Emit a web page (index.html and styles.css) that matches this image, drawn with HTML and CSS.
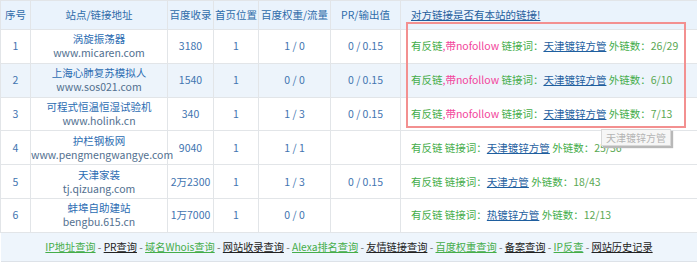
FILE: index.html
```html
<!DOCTYPE html>
<html lang="zh-CN">
<head>
<meta charset="utf-8">
<title>友情链接查询</title>
<link rel="stylesheet" href="styles.css">
</head>
<body>
<div class="wrap">
  <table class="links">
    <colgroup>
      <col class="c-no"><col class="c-site"><col class="c-idx"><col class="c-pos"><col class="c-wt"><col class="c-pr"><col class="c-chk">
    </colgroup>
    <thead>
      <tr>
        <th>序号</th>
        <th>站点/链接地址</th>
        <th>百度收录</th>
        <th>首页位置</th>
        <th>百度权重/流量</th>
        <th>PR/输出值</th>
        <th class="left"><a class="head-link" href="#">对方链接是否有本站的链接!</a></th>
      </tr>
    </thead>
    <tbody>
      <tr>
        <td>1</td>
        <td><div class="name">涡旋振荡器</div><div class="url">www.micaren.com</div></td>
        <td>3180</td><td>1</td><td>1 / 0</td><td>0 / 0.15</td>
        <td class="left"><span class="g">有反链</span><span class="p">,带nofollow</span> <span class="g">链接词：</span><a class="kw" href="#">天津镀锌方管</a> <span class="g">外链数：</span><span class="n">26/29</span></td>
      </tr>
      <tr class="alt">
        <td>2</td>
        <td><div class="name">上海心肺复苏模拟人</div><div class="url">www.sos021.com</div></td>
        <td>1540</td><td>1</td><td>0 / 0</td><td>0 / 0.15</td>
        <td class="left"><span class="g">有反链</span><span class="p">,带nofollow</span> <span class="g">链接词：</span><a class="kw" href="#">天津镀锌方管</a> <span class="g">外链数：</span><span class="n">6/10</span></td>
      </tr>
      <tr>
        <td>3</td>
        <td><div class="name">可程式恒温恒湿试验机</div><div class="url">www.holink.cn</div></td>
        <td>340</td><td>1</td><td>1 / 3</td><td>0 / 0.15</td>
        <td class="left"><span class="g">有反链</span><span class="p">,带nofollow</span> <span class="g">链接词：</span><a class="kw" href="#">天津镀锌方管</a> <span class="g">外链数：</span><span class="n">7/13</span></td>
      </tr>
      <tr>
        <td>4</td>
        <td><div class="name">护栏钢板网</div><div class="url">www.pengmengwangye.com</div></td>
        <td>9040</td><td>1</td><td>1 / 1</td><td></td>
        <td class="left"><span class="g">有反链</span> <span class="g">链接词：</span><a class="kw" href="#">天津镀锌方管</a> <span class="g">外链数：</span><span class="n">25/36</span></td>
      </tr>
      <tr>
        <td>5</td>
        <td><div class="name">天津家装</div><div class="url">tj.qizuang.com</div></td>
        <td>2万2300</td><td>1</td><td>1 / 3</td><td>0 / 0.15</td>
        <td class="left"><span class="g">有反链</span> <span class="g">链接词：</span><a class="kw" href="#">天津方管</a> <span class="g">外链数：</span><span class="n">18/43</span></td>
      </tr>
      <tr>
        <td>6</td>
        <td><div class="name">蚌埠自助建站</div><div class="url">bengbu.615.cn</div></td>
        <td>1万7000</td><td>1</td><td>0 / 0</td><td></td>
        <td class="left"><span class="g">有反链</span> <span class="g">链接词：</span><a class="kw" href="#">热镀锌方管</a> <span class="g">外链数：</span><span class="n">12/13</span></td>
      </tr>
    </tbody>
    <tfoot>
      <tr>
        <td colspan="7" class="foot">
          <a class="fg" href="#">IP地址查询</a> - <a class="fb" href="#">PR查询</a> - <a class="fg" href="#">域名Whois查询</a> - <a class="fb" href="#">网站收录查询</a> - <a class="fg" href="#">Alexa排名查询</a> - <a class="fb" href="#">友情链接查询</a> - <a class="fg" href="#">百度权重查询</a> - <a class="fb" href="#">备案查询</a> - <a class="fg" href="#">IP反查</a> - <a class="fb" href="#">网站历史记录</a>
        </td>
      </tr>
    </tfoot>
  </table>
  <div class="highlight"></div>
  <div class="tip">天津镀锌方管</div>
</div>
</body>
</html>
```

FILE: styles.css
```css
html, body {
  margin: 0;
  padding: 0;
  background: #ffffff;
}
body {
  font-family: "Noto Sans CJK SC", "Liberation Sans", sans-serif;
  font-size: 10.5px;
  font-weight: 400;
  color: #3d6fa8;
}
.wrap {
  position: relative;
  width: 697px;
}
.links {
  width: 697px;
  border-collapse: collapse;
  table-layout: fixed;
}
.c-no { width: 30px; }
.c-site { width: 137px; }
.c-idx { width: 46px; }
.c-pos { width: 45px; }
.c-wt { width: 72px; }
.c-pr { width: 70px; }
.c-chk { width: 297px; }

.links th, .links td {
  border: 1px solid #e2e5e8;
  text-align: center;
  vertical-align: middle;
  padding: 0;
  line-height: 14px;
}
.links th {
  height: 28px;
  background: #eaf3fc;
  font-weight: 400;
  color: #2f6caa;
}
.links tbody td {
  height: 32.8px;
  color: #4274b0;
}
.links tbody tr.alt td {
  background: #edf4fb;
}
.links .left {
  text-align: left;
  padding-left: 10px;
}
.head-link {
  color: #1f5d9c;
  text-decoration: underline;
}
.name {
  color: #2b6cb2;
}
.url {
  color: #52708f;
}
.g { color: #45ad4a; }
.p { color: #f2449b; }
.n { color: #5aa853; }
.kw {
  color: #1f5f9f;
  text-decoration: underline;
}
.links td.foot {
  height: 28px;
  background: #eef5fc;
  color: #666666;
  font-size: 10.2px;
  border-left: none;
  border-right: none;
  border-bottom: 1px solid #dde2e8;
}
.fg {
  color: #45ad4a;
  text-decoration: underline;
}
.fb {
  color: #222222;
  text-decoration: underline;
}
.highlight {
  position: absolute;
  left: 406px;
  top: 22px;
  width: 276px;
  height: 102px;
  border: 2px solid #f39090;
  pointer-events: none;
}
.tip {
  position: absolute;
  left: 601px;
  top: 129px;
  width: 68px;
  height: 15px;
  line-height: 15px;
  background: #f6f6f6;
  border: 1px solid #d8d8d8;
  box-shadow: 2px 2px 1px #b8b8b8;
  color: #b4b4b4;
  font-size: 10px;
  text-align: center;
}
```
